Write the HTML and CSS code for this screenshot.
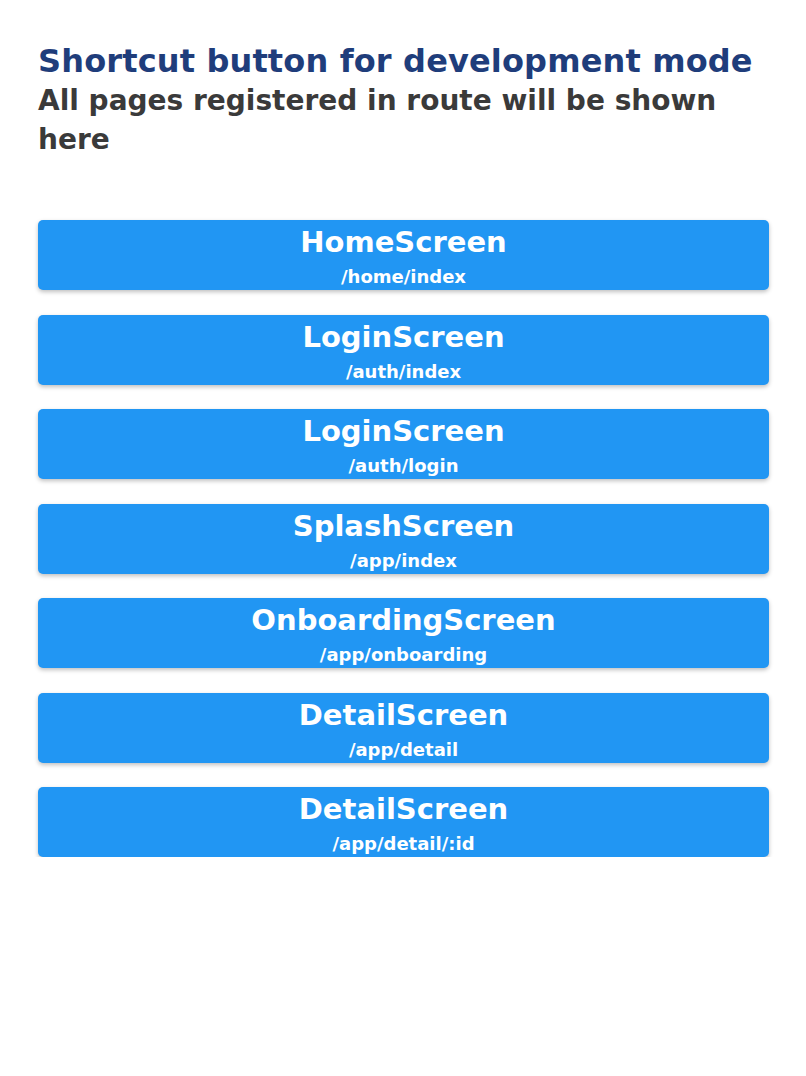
FILE: index.html
```html
<!DOCTYPE html>
<html>
<head>
<meta charset="utf-8">
<link rel="stylesheet" href="styles.css">
</head>
<body>
<div class="page">
  <h1 class="title">Shortcut button for development mode</h1>
  <p class="subtitle">All pages registered in route will be shown here</p>
  <div class="list">
    <div class="btn"><span class="name">HomeScreen</span><span class="route">/home/index</span></div>
    <div class="btn"><span class="name">LoginScreen</span><span class="route">/auth/index</span></div>
    <div class="btn"><span class="name">LoginScreen</span><span class="route">/auth/login</span></div>
    <div class="btn"><span class="name">SplashScreen</span><span class="route">/app/index</span></div>
    <div class="btn"><span class="name">OnboardingScreen</span><span class="route">/app/onboarding</span></div>
    <div class="btn"><span class="name">DetailScreen</span><span class="route">/app/detail</span></div>
    <div class="btn"><span class="name">DetailScreen</span><span class="route">/app/detail/:id</span></div>
  </div>
</div>
</body>
</html>
```
FILE: styles.css
```css
html, body {
  margin: 0;
  padding: 0;
  background: #ffffff;
}
body {
  font-family: "DejaVu Sans", "Open Sans", sans-serif;
}
.page {
  padding: 42px 37px 0 38px;
}
.title {
  margin: 0;
  font-size: 32px;
  font-weight: 700;
  line-height: 39px;
  color: #1f3d7b;
  letter-spacing: 0.15px;
  white-space: nowrap;
}
.subtitle {
  margin: 0;
  font-size: 28px;
  font-weight: 700;
  line-height: 39px;
  color: #3a3a3a;
  max-width: 700px;
}
.list {
  margin-top: 61px;
  display: flex;
  flex-direction: column;
  gap: 24.5px;
}
.btn {
  height: 70px;
  box-sizing: border-box;
  padding-top: 6px;
  background: #2196f3;
  border-radius: 5px;
  box-shadow: 0 2px 4px rgba(0,0,0,0.25);
  display: flex;
  flex-direction: column;
  align-items: center;
  color: #ffffff;
}
.name {
  font-size: 29px;
  font-weight: 700;
  line-height: 32px;
}
.route {
  margin-top: 8px;
  font-size: 18px;
  font-weight: 700;
  line-height: 22px;
}
```
